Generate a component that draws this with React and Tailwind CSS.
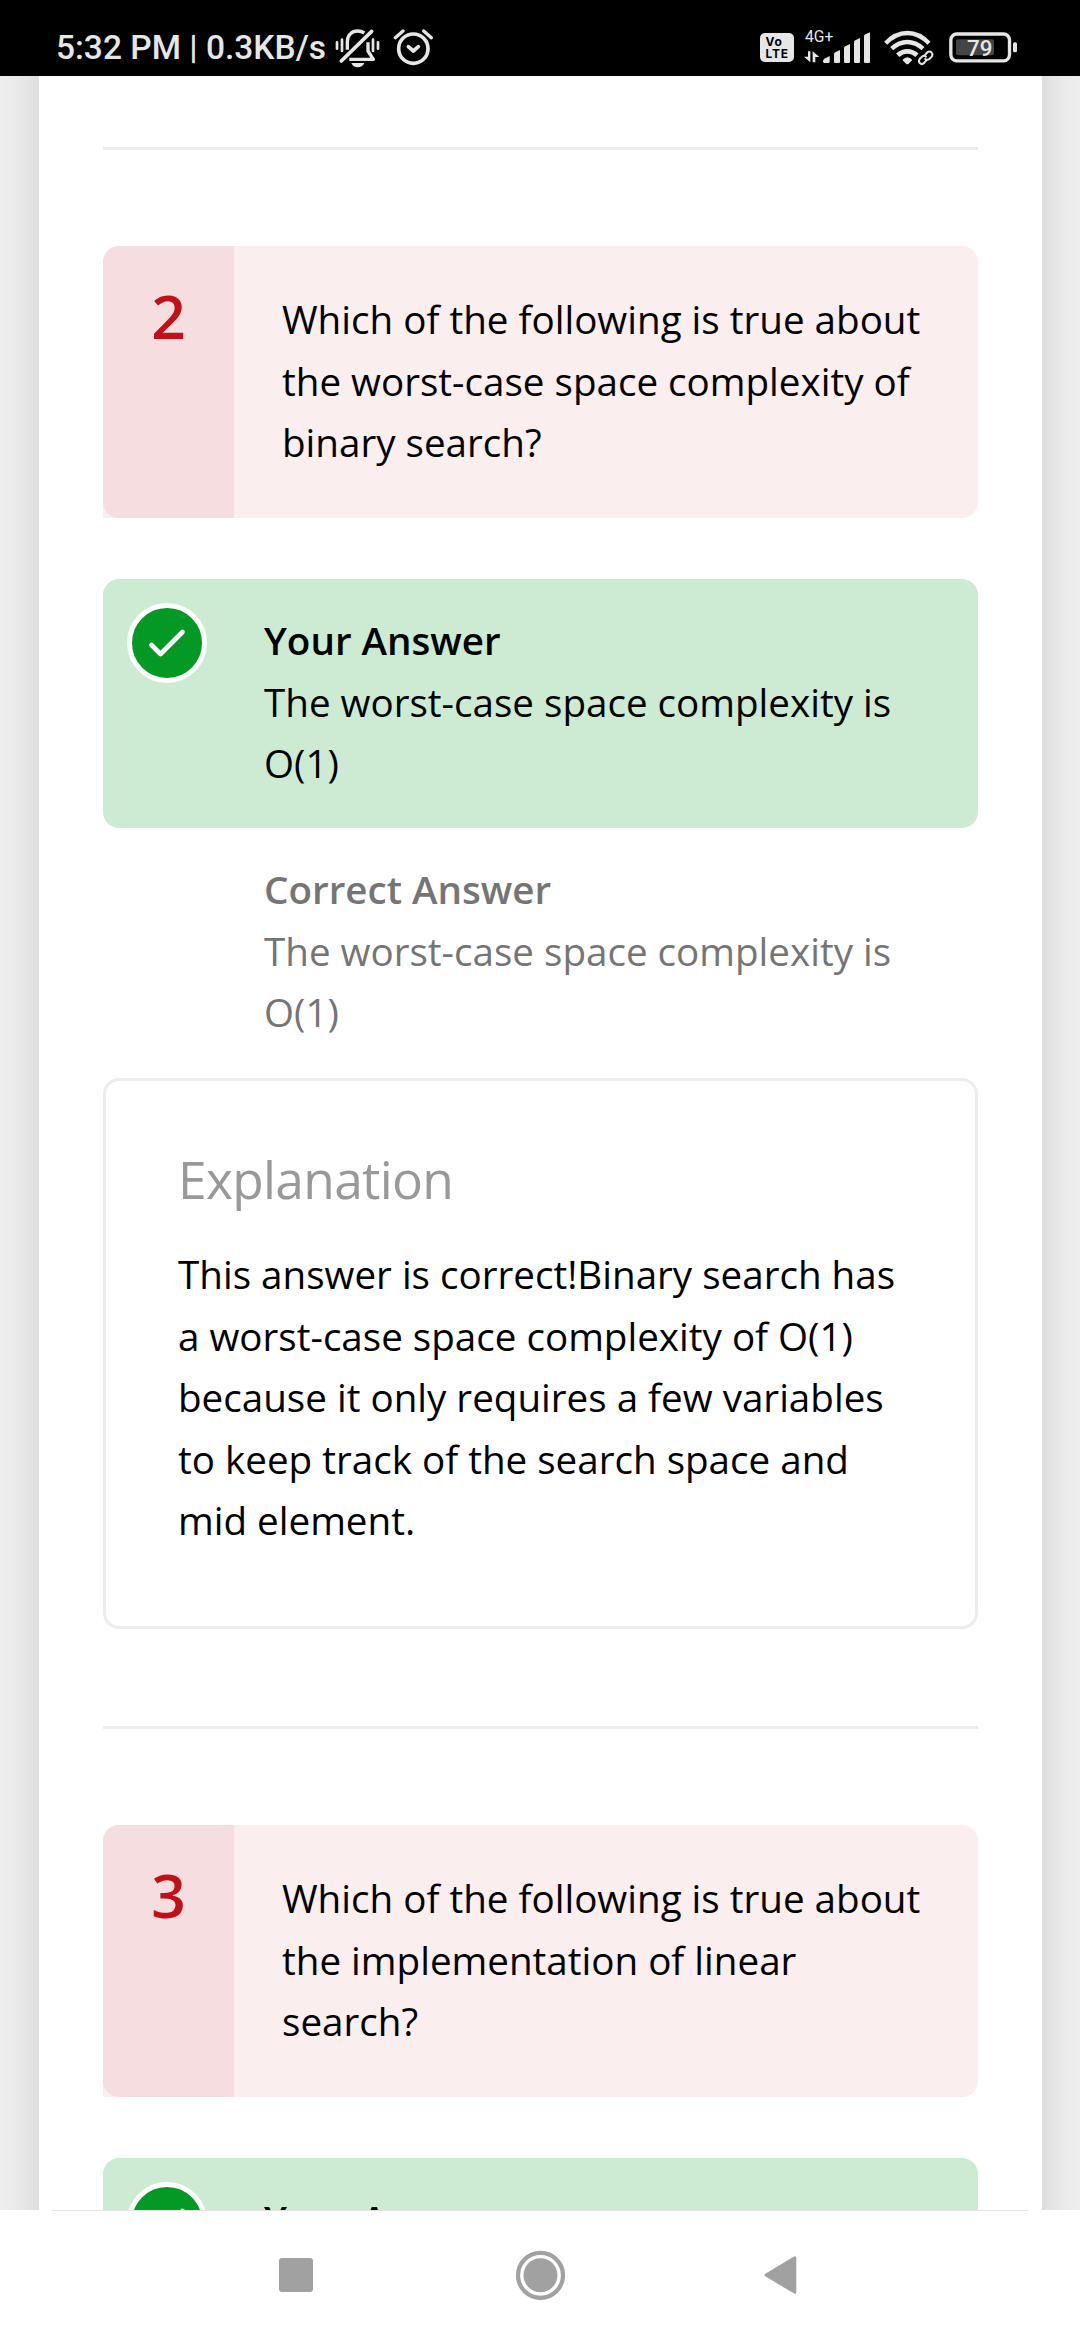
const INK = "#e6e6e6";

function BellOff() {
  return (
    <svg className="ml-[6px] h-[42px] w-[47px] shrink-0" viewBox="1000 80 141 126" fill="none" stroke={INK} strokeWidth="10">
      <path d="M1040 148V124C1040 104 1054 92 1071 92C1079 92 1085 94 1091 98" />
      <path d="M1113 93L1022 182" strokeWidth="11" strokeLinecap="round" />
      <path d="M1102 126V152L1118 177H1046" strokeLinejoin="round" />
      <path d="M1052 188H1091C1088 196 1080 201 1071 201C1062 201 1055 196 1052 188Z" fill={INK} stroke="none" />
      <path d="M1009 126V145M1024 118V152M1117 118V152M1132 126V145" strokeWidth="8" strokeLinecap="round" />
    </svg>
  );
}

function Alarm() {
  return (
    <svg className="ml-[12px] h-[42px] w-[41px] shrink-0" viewBox="1180 80 123 126" fill="none" stroke={INK} strokeLinecap="round" strokeLinejoin="round">
      <circle cx="1241" cy="145" r="44" strokeWidth="11" />
      <path d="M1187 112L1210 92M1272 92L1295 112" strokeWidth="10" />
      <path d="M1226 139L1241 152L1256 139" strokeWidth="11" />
    </svg>
  );
}

function Signal() {
  return (
    <svg className="h-[42px] w-[67px]" viewBox="191 80 201 126" fill={INK}>
      <text x="194" y="125.5" fontFamily="Roboto" fontSize="47">4G+</text>
      <path d="M203 153H210V186L191 169H203ZM217 186V153L237 170H225V186Z" />
      <path d="M248 183Q248 178 252 175L268 167V184Q268 188 264 188H252Q248 188 248 183Z" />
      <path d="M281 162Q281 158 285 156L299 149V184Q299 188 295 188H285Q281 188 281 184Z" />
      <path d="M311 144Q311 140 315 138L329 131V184Q329 188 325 188H315Q311 188 311 184Z" />
      <path d="M341 126Q341 122 345 120L359 113V184Q359 188 355 188H345Q341 188 341 184Z" />
      <path d="M371 108Q371 104 375 102L389 96V184Q389 188 385 188H375Q371 188 371 184Z" />
    </svg>
  );
}

function Wifi() {
  return (
    <svg className="h-[42px] w-[50px]" viewBox="431 80 150 126" fill="none" stroke={INK}>
      <path d="M436 129Q465 98 501 98Q537 98 566 129" strokeWidth="13" />
      <path d="M454 145Q476 125 501 125Q526 125 548 145" strokeWidth="13" />
      <path d="M472 165Q485 153 501 153Q517 153 530 165" strokeWidth="14" />
      <path d="M486 179Q501 162 516 179L505 190Q501 194 497 190Z" fill={INK} stroke="none" />
      <path d="M546 182L568 162" stroke="#000" strokeWidth="18" strokeLinecap="round" />
      <g strokeWidth="6" strokeLinecap="round">
        <path d="M553 165L561 156Q567 151 573 156Q579 162 574 169L567 176Q561 181 555 176" />
        <path d="M558 180L551 188Q545 194 539 189Q533 183 538 176L545 169Q551 164 557 169" />
      </g>
    </svg>
  );
}

function Battery() {
  return (
    <svg className="h-[42px] w-[69px]" viewBox="627 80 207 126">
      <rect x="632.5" y="101" width="176" height="80.5" rx="18" fill="none" stroke={INK} strokeWidth="10" />
      <rect x="648" y="117" width="114" height="48" rx="6" fill="#444" />
      <text x="681" y="167" fill={INK} fontFamily="Roboto" fontWeight="500" fontSize="67">79</text>
      <rect x="819" y="126" width="12" height="30" rx="5" fill={INK} />
    </svg>
  );
}

function StatusBar() {
  return (
    <header className="flex h-[76px] shrink-0 items-start bg-black pt-[27px] font-['Roboto',sans-serif] text-[#e6e6e6]">
      <span className="ml-[56px] w-[272px] whitespace-nowrap text-[33.5px] font-medium leading-[42px]">5:32 PM | 0.3KB/s</span>
      <BellOff />
      <Alarm />
      <div className="ml-auto mr-[62px] flex">
        <div className="mr-[10px] mt-[6px] h-[29px] w-[34px] rounded-[5px] bg-[#e6e6e6] pl-[5.5px] pt-[2.5px] font-['Inter',sans-serif] text-[12px] font-bold leading-[12.5px] tracking-[0.8px] text-black">
          <div>Vo</div>
          <div>LTE</div>
        </div>
        <Signal />
        <div className="ml-[13px]"><Wifi /></div>
        <div className="ml-[15px]"><Battery /></div>
      </div>
    </header>
  );
}

function Divider() {
  return <div className="h-[3px] bg-[#ededed]" />;
}

function Question({ number, children }) {
  return (
    <section className="mt-[96px] flex h-[272px] rounded-r-[16px] rounded-tl-[16px] bg-[#faeeee]">
      <div className="w-[131px] shrink-0 rounded-l-[16px] bg-[#f6dee0] pt-[29px] text-center text-[60.5px] font-semibold leading-[82px] text-[#c01119]">{number}</div>
      <p className="w-[698px] pl-[48px] pt-[43px]">{children}</p>
    </section>
  );
}

function Answer({ title, chosen, children }) {
  return (
    <section className={chosen ? "flex h-[249px] rounded-[16px] bg-[#cdebd3] text-black" : "flex h-[250px] text-[#757575]"}>
      <div className="w-[161px] shrink-0 pl-[24px] pt-[24px]">
        {chosen && (
          <svg className="size-[80px]" viewBox="0 0 80 80">
            <circle cx="40" cy="40" r="37.5" fill="#049825" stroke="#fff" strokeWidth="5" />
            <path d="M24.500 42L33.500 51L55.500 29" fill="none" stroke="#fff" strokeWidth="4.600" strokeLinecap="round" strokeLinejoin="round" />
          </svg>
        )}
      </div>
      <div className="w-[660px] pt-[31px]">
        <h3 className="font-semibold">{title}</h3>
        <p>{children}</p>
      </div>
    </section>
  );
}

function NavBar() {
  return (
    <nav className="h-[130px] shrink-0 bg-white">
      <div className="mx-[52px] h-px bg-[#e3e3e3]" />
      <div className="flex h-[128px] items-center pl-[279px]">
        <div className="size-[34px] rounded-[3px] bg-[#a1a1a1]" />
        <svg className="ml-[202px] size-[50px]" viewBox="0 0 50 50">
          <circle cx="25.5" cy="25.300" r="22.5" fill="none" stroke="#a1a1a1" strokeWidth="4.200" />
          <circle cx="25.5" cy="25.300" r="17" fill="#a1a1a1" />
        </svg>
        <svg className="ml-[199px] h-[40px] w-[33px]" viewBox="0 0 33 40">
          <path d="M2 20L30.800 2.800V37.200Z" fill="#a1a1a1" stroke="#a1a1a1" strokeWidth="3" strokeLinejoin="round" />
        </svg>
      </div>
    </nav>
  );
}

export default function App() {
  return (
    <div className="flex h-[2340px] w-[1080px] flex-col overflow-hidden bg-white">
      <StatusBar />
      <div className="flex min-h-0 flex-1 overflow-hidden">
        <div className="w-[39px] shrink-0 bg-linear-to-r from-[#eeeeee] via-[#e9e9e9] to-[#dedede]" />
        <main className="w-[1003px] shrink-0 bg-white px-[64px] pt-[71px] font-['Open_Sans',sans-serif] text-[38.6px] leading-[61.6px] text-black">
          <Divider />
          <Question number="2">Which of the following is true about the worst-case space complexity of binary search?</Question>
          <div className="mt-[61px]">
            <Answer title="Your Answer" chosen>The worst-case space complexity is O(1)</Answer>
            <Answer title="Correct Answer">The worst-case space complexity is O(1)</Answer>
          </div>
          <section className="mb-[97px] h-[551px] rounded-[16px] border-[3px] border-[#ededed] pl-[72px] pt-[62px]">
            <h2 className="text-[51.5px] leading-[72px] tracking-[-0.69px] text-[#999999]">Explanation</h2>
            <p className="mt-[29px] w-[735px]">This answer is correct!Binary search has a worst-case space complexity of O(1) because it only requires a few variables to keep track of the search space and mid element.</p>
          </section>
          <Divider />
          <Question number="3">Which of the following is true about the implementation of linear search?</Question>
          <div className="mt-[61px]">
            <Answer title="Your Answer" chosen />
          </div>
        </main>
        <div className="w-[38px] shrink-0 bg-linear-to-r from-[#dedede] via-[#e9e9e9] to-[#eeeeee]" />
      </div>
      <NavBar />
    </div>
  );
}
